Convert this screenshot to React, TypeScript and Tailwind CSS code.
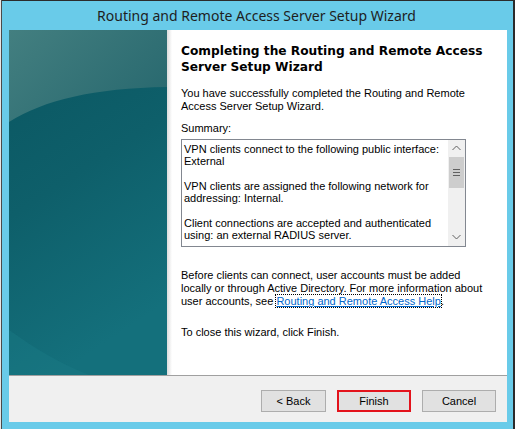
import React from 'react';

/* Asistente de RRAS (Windows Server) — pantalla final "Completing…". */

const sans = { fontFamily: '"Liberation Sans", Arial, sans-serif' };

function TealPanel() {
  return (
    <svg width="158" height="345" viewBox="0 0 158 345" className="block">
      <defs>
        <linearGradient id="base" x1="0" y1="0" x2="0.3" y2="1">
          <stop offset="0" stopColor="#0a5661" />
          <stop offset="0.5" stopColor="#0e5f6a" />
          <stop offset="1" stopColor="#14707c" />
        </linearGradient>
        <linearGradient id="top" x1="0" y1="0" x2="1" y2="0.6">
          <stop offset="0" stopColor="#437f80" />
          <stop offset="1" stopColor="#2a6a70" />
        </linearGradient>
      </defs>
      <rect width="158" height="345" fill="url(#base)" />
      <path d="M0,92 C35,70 85,58 158,57 L158,0 L0,0 Z" fill="url(#top)" />
      <path d="M0,300 C25,318 50,333 80,345 L0,345 Z" fill="#1a7a84" opacity="0.45" />
    </svg>
  );
}

function Chevron({ up }: { up?: boolean }) {
  return (
    <svg width="9" height="6" viewBox="0 0 9 6">
      <path
        d={up ? 'M0.5,5 L4.5,1 L8.5,5' : 'M0.5,1 L4.5,5 L8.5,1'}
        fill="none"
        stroke="#606060"
        strokeWidth="1"
      />
    </svg>
  );
}

function SummaryBox() {
  return (
    <div className="flex w-[285px] h-[108px] border border-[#828790] bg-white">
      <div className="flex-1 pl-[2px] pt-[3px] text-[11px] leading-[12.3px] text-black whitespace-nowrap overflow-hidden">
        <div>VPN clients connect to the following public interface:</div>
        <div>External</div>
        <div>&nbsp;</div>
        <div>VPN clients are assigned the following network for</div>
        <div>addressing: Internal.</div>
        <div>&nbsp;</div>
        <div>Client connections are accepted and authenticated</div>
        <div>using: an external RADIUS server.</div>
      </div>
      <div className="w-[17px] flex flex-col bg-[#f0f0f0]">
        <div className="h-[17px] flex items-center justify-center">
          <Chevron up />
        </div>
        <div className="h-[31px] bg-[#cdcdcd] flex items-center justify-center mx-[1px]">
          <div className="flex flex-col gap-[2px]">
            <div className="w-[7px] h-px bg-[#606060]" />
            <div className="w-[7px] h-px bg-[#606060]" />
            <div className="w-[7px] h-px bg-[#606060]" />
          </div>
        </div>
        <div className="flex-1" />
        <div className="h-[17px] flex items-center justify-center">
          <Chevron />
        </div>
      </div>
    </div>
  );
}

function Button({ label, width, focused }: { label: string; width: string; focused?: boolean }) {
  return (
    <div
      className={`h-[22px] flex items-center justify-center bg-[#e1e1e1] text-[11px] text-black ${width} ${
        focused ? 'border-2 border-[#e3131c]' : 'border border-[#adadad]'
      }`}
    >
      {label}
    </div>
  );
}

export default function App() {
  return (
    <div className="relative w-[515px] h-[429px] flex bg-[#2b2b2b] overflow-hidden" style={sans}>
      <div className="w-px bg-[#e6e6e6]" />
      <div className="w-px bg-[#4a4a4a]" />
      <div className="w-[511px] mt-px flex flex-col bg-[#69cbe9]">
        <div
          className="h-[29px] flex items-center justify-center text-[14px] text-[#1e1e1e] pr-[2px]"
          style={{ fontFamily: '"Noto Sans", "Open Sans", sans-serif' }}
        >
          Routing and Remote Access Server Setup Wizard
        </div>
        <div className="ml-[7px] mr-[6px] h-[392px] flex flex-col">
          <div className="h-[345px] flex">
            <TealPanel />
            <div className="w-[5px] bg-gradient-to-r from-[#dcdcdc] to-white" />
            <div className="flex-1 bg-white pl-[9px] pt-[13px] text-[11px] leading-[13.3px] text-black">
              <h1
                className="text-[12.2px] leading-[16px] font-bold text-black"
                style={{ fontFamily: '"DejaVu Sans", Verdana, sans-serif' }}
              >
                Completing the Routing and Remote Access
                <br />
                Server Setup Wizard
              </h1>
              <p className="mt-[12px]">
                You have successfully completed the Routing and Remote
                <br />
                Access Server Setup Wizard.
              </p>
              <p className="mt-[8px] mb-[4px]">Summary:</p>
              <SummaryBox />
              <p className="mt-[22px]">
                Before clients can connect, user accounts must be added
                <br />
                locally or through Active Directory. For more information about
                <br />
                user accounts, see{' '}
                <span className="outline-1 outline-dotted outline-black text-[#0066cc] underline">
                  Routing and Remote Access Help
                </span>
                .
              </p>
              <p className="mt-[17px]">To close this wizard, click Finish.</p>
            </div>
          </div>
          <div className="h-px bg-[#a0a0a0]" />
          <div className="flex-1 bg-[#f0f0f0] flex justify-end items-start pt-[14px] pr-[11px] gap-[11px]">
            <Button label="< Back" width="w-[65px]" />
            <Button label="Finish" width="w-[74px]" focused />
            <Button label="Cancel" width="w-[74px]" />
          </div>
        </div>
      </div>
      <div className="w-[2px]" />
    </div>
  );
}
